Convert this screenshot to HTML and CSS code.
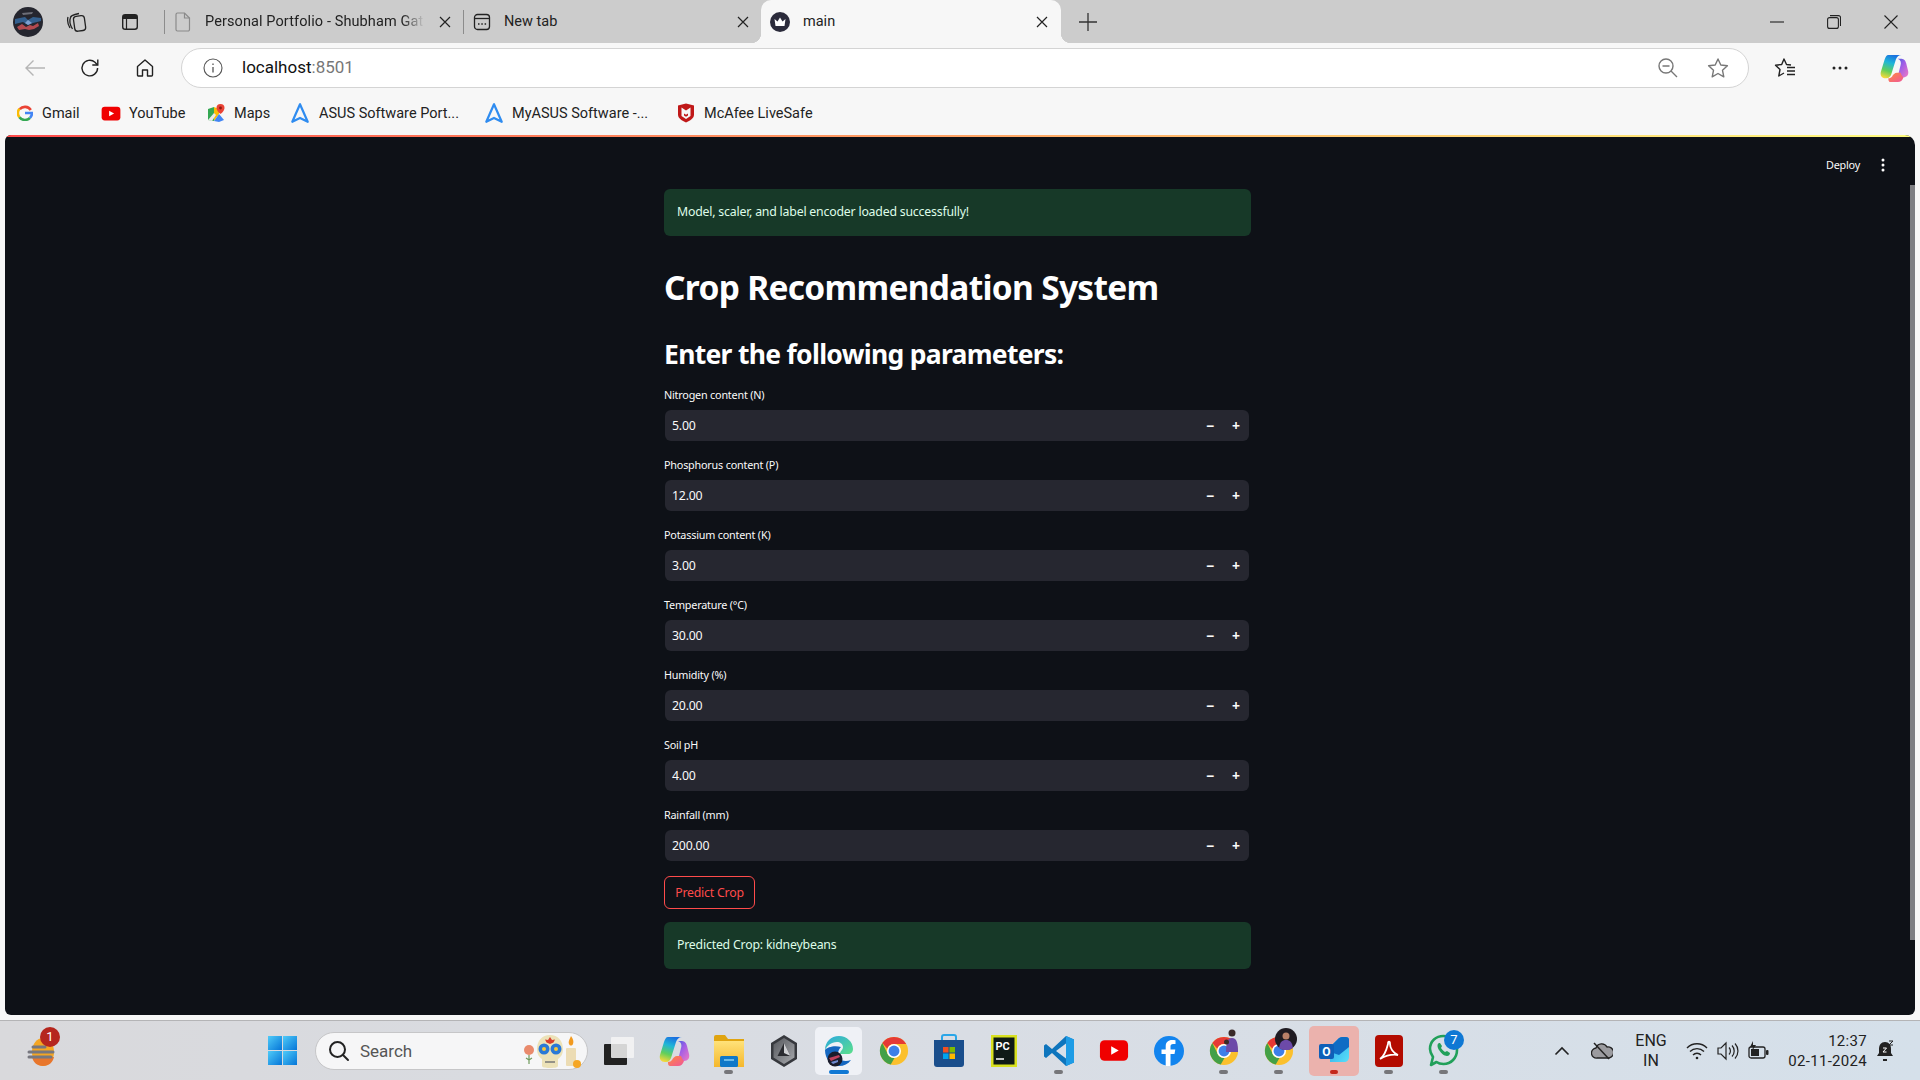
FILE: index.html
```html
<!DOCTYPE html>
<html lang="en">
<head>
<meta charset="utf-8">
<title>main</title>
<link rel="stylesheet" href="styles.css">
</head>
<body>
<svg class="defs" width="0" height="0" aria-hidden="true">
  <defs>
    <linearGradient id="copA" x1="0.6" y1="0" x2="0.3" y2="1"><stop offset="0" stop-color="#1a6fe0"/><stop offset=".35" stop-color="#1fb6d8"/><stop offset=".7" stop-color="#62cf5a"/><stop offset="1" stop-color="#f2d83c"/></linearGradient>
    <linearGradient id="copB" x1="0" y1="0" x2="1" y2="1"><stop offset="0" stop-color="#3a5fe0"/><stop offset=".45" stop-color="#a25ee6"/><stop offset="1" stop-color="#f07ac4"/></linearGradient>
    <linearGradient id="copC" x1="0" y1="0" x2="1" y2="1"><stop offset="0" stop-color="#ff8a3d"/><stop offset="1" stop-color="#f0569a"/></linearGradient>
    <linearGradient id="winG" x1="0" y1="0" x2="1" y2="1"><stop offset="0" stop-color="#4fcbf8"/><stop offset="1" stop-color="#0575d8"/></linearGradient>
    <linearGradient id="edgeG" x1="0" y1="0" x2="1" y2="1"><stop offset="0" stop-color="#2aa8e0"/><stop offset="1" stop-color="#5ce08a"/></linearGradient>
    <linearGradient id="folderG" x1="0" y1="0" x2="0" y2="1"><stop offset="0" stop-color="#ffe27a"/><stop offset="1" stop-color="#f5b72c"/></linearGradient>
    <linearGradient id="hexG" x1="0" y1="0" x2="1" y2="1"><stop offset="0" stop-color="#55575c"/><stop offset="1" stop-color="#a8aaae"/></linearGradient>
    <linearGradient id="olG" x1="0" y1="0" x2="1" y2="1"><stop offset="0" stop-color="#2aa3e8"/><stop offset="1" stop-color="#58e0fa"/></linearGradient>
    <symbol id="copilot" viewBox="0 0 32 32">
      <path d="M10 2h14c-3 0-5 2-6 5l-5 16c-1 2-2 4-5 4H7c-4 0-6-3-5-7L6 7c1-3 2-5 4-5z" fill="url(#copA)"/>
      <path d="M20 6h3c3 0 5 1 6 5l2 8c1 4-1 7-5 7h-8c2-1 3-3 3-5l2-8c1-3 0-6-3-7z" fill="url(#copB)"/>
      <path d="M10 27c2 0 3-1 4-2 1-2 3-4 5-4h4c1 3 3 5 3 5-1 3-3 5-6 5h-8c-2 0-2-3-2-4z" fill="url(#copC)"/>
    </symbol>
    <symbol id="chrome" viewBox="0 0 32 32">
      <circle cx="16" cy="16" r="15" fill="#fbc02d"/>
      <path d="M16 1a15 15 0 0 1 13 7.500H16a7.500 7.500 0 0 0-7 5L3.500 7.500A15 15 0 0 1 16 1z" fill="#e53935"/>
      <path d="M3.500 7.500L9.500 19.500a7.500 7.500 0 0 0 7 4L12.500 30.500A15 15 0 0 1 3.500 7.500z" fill="#43a047"/>
      <circle cx="16" cy="16" r="7.500" fill="#fff"/>
      <circle cx="16" cy="16" r="5.800" fill="#3d7fe8"/>
    </symbol>
    <symbol id="asus" viewBox="0 0 20 20">
      <path d="M10 2L3 18l7-3.500L17 18z" fill="none" stroke="#2f8cf0" stroke-width="2" stroke-linejoin="round"/>
    </symbol>
    <symbol id="ytb" viewBox="0 0 32 24">
      <rect x="1" y="1" width="30" height="22" rx="5" fill="#f00000"/>
      <path d="M13 7.500l8 4.500-8 4.500z" fill="#fff"/>
    </symbol>
  </defs>
</svg>

<header class="tabstrip">
  <svg class="avatar" width="30" height="30" viewBox="0 0 30 30"><circle cx="15" cy="15" r="15" fill="#25262f"/><path d="M2 12l10-2 3 3 5-3 8 1v3l-8 2-5 2-5-3-8 2z" fill="#34608f"/><path d="M4 20l5-3 4 3 4-2 3 1 5-3 1 3-5 3-5 1-4-1-6 1z" fill="#b24a50"/><path d="M9 6l11-1-1 2-9 1z" fill="#6c6e78"/><path d="M15 13l4 3-4 2-3-2z" fill="#7da0d0"/></svg>
  <button class="strip-btn" aria-label="Collections"><svg width="22" height="22" viewBox="0 0 22 22" fill="none" stroke="#222" stroke-width="1.300"><rect x="8" y="5" width="11" height="15" rx="3" transform="rotate(-8 13 12)"/><path d="M6.500 18C4 14 3.500 9 4.500 6.500 5 4.500 7 4 9 3.500l4-1"/><path d="M4 17C1.500 13 1.500 8 2 6"/></svg></button>
  <button class="strip-btn" aria-label="Vertical tabs"><svg width="20" height="20" viewBox="0 0 20 20"><rect x="2.700" y="2.700" width="14.600" height="14.600" rx="2.500" fill="none" stroke="#222" stroke-width="1.400"/><path d="M3 3h14v4H3z" fill="#222"/><path d="M6.500 7v10" stroke="#222" stroke-width="1.200"/></svg></button>
  <span class="tab-sep"></span>
  <div class="tab tab-first">
    <svg width="18" height="20" viewBox="0 0 18 20" fill="none" stroke="#8a8a8a" stroke-width="1.200"><path d="M3.500 1h7l5 5v11.500a1.500 1.500 0 0 1-1.500 1.500H3.500A1.500 1.500 0 0 1 2 17.500v-15A1.500 1.500 0 0 1 3.500 1z"/><path d="M10.500 1v5h5"/></svg>
    <span class="tab-title tab-fade">Personal Portfolio - Shubham Gat</span>
    <button class="tab-close" aria-label="Close"><svg width="12" height="12" viewBox="0 0 12 12" stroke="#222" stroke-width="1.200"><path d="M1 1l10 10M11 1L1 11"/></svg></button>
  </div>
  <span class="tab-sep tab-sep-flat"></span>
  <div class="tab tab-second">
    <svg width="18" height="18" viewBox="0 0 18 18" fill="none" stroke="#222" stroke-width="1.300"><rect x="1.500" y="1.500" width="15" height="15" rx="3"/><path d="M1.500 5.500h15"/><path d="M5 11h1.500M8.300 11h1.500M11.600 11h1.500" stroke-width="1.600"/></svg>
    <span class="tab-title">New tab</span>
    <button class="tab-close" aria-label="Close"><svg width="12" height="12" viewBox="0 0 12 12" stroke="#222" stroke-width="1.200"><path d="M1 1l10 10M11 1L1 11"/></svg></button>
  </div>
  <div class="tab tab-active">
    <svg width="20" height="20" viewBox="0 0 20 20"><circle cx="10" cy="10" r="10" fill="#2b2b3b"/><path d="M4.500 7l3 2.500L10 5.500l2.500 4 3-2.500-1 7h-9z" fill="#fff"/></svg>
    <span class="tab-title">main</span>
    <button class="tab-close" aria-label="Close"><svg width="12" height="12" viewBox="0 0 12 12" stroke="#222" stroke-width="1.200"><path d="M1 1l10 10M11 1L1 11"/></svg></button>
  </div>
  <button class="new-tab" aria-label="New tab"><svg width="18" height="18" viewBox="0 0 18 18" stroke="#333" stroke-width="1.300"><path d="M9 0v18M0 9h18"/></svg></button>
  <div class="win-controls">
    <button class="win-btn" aria-label="Minimize"><svg width="14" height="14" viewBox="0 0 14 14" stroke="#222" stroke-width="1.100"><path d="M0 7h14"/></svg></button>
    <button class="win-btn" aria-label="Restore"><svg width="14" height="14" viewBox="0 0 14 14" fill="none" stroke="#222" stroke-width="1.100"><rect x=".6" y="2.600" width="10.800" height="10.800" rx="2"/><path d="M3 .6h8.500a2 2 0 0 1 2 2V11"/></svg></button>
    <button class="win-btn" aria-label="Close window"><svg width="14" height="14" viewBox="0 0 14 14" stroke="#222" stroke-width="1.100"><path d="M.5.500l13 13M13.500.500l-13 13"/></svg></button>
  </div>
</header>

<nav class="toolbar">
  <button class="tool-btn" aria-label="Back"><svg width="22" height="18" viewBox="0 0 22 18" fill="none" stroke="#b5b5b5" stroke-width="1.400"><path d="M21 9H2M9.500 1.500L2 9l7.500 7.500"/></svg></button>
  <button class="tool-btn" aria-label="Reload"><svg width="22" height="22" viewBox="0 0 22 22" fill="none" stroke="#222" stroke-width="1.400"><path d="M18.600 11a7.800 7.800 0 1 1-2.600-5.800L18.500 8"/><path d="M18.800 2.500V8h-5.500"/></svg></button>
  <button class="tool-btn" aria-label="Home"><svg width="20" height="20" viewBox="0 0 20 20" fill="none" stroke="#222" stroke-width="1.400" stroke-linejoin="round"><path d="M2.500 8.500L10 2l7.500 6.500V17a1 1 0 0 1-1 1h-4v-6h-5v6h-4a1 1 0 0 1-1-1z"/></svg></button>
  <div class="address">
    <svg class="addr-info" width="20" height="20" viewBox="0 0 20 20" fill="none" stroke="#555" stroke-width="1.100"><circle cx="10" cy="10" r="9"/><path d="M10 9v5.500M10 5.500v1.500" stroke-width="1.300"/></svg>
    <span class="addr-text">localhost<span class="addr-port">:8501</span></span>
    <svg class="addr-zoom" width="20" height="20" viewBox="0 0 20 20" fill="none" stroke="#777" stroke-width="1.400"><circle cx="8" cy="8" r="7"/><path d="M13 13l6 6M4.500 8h7"/></svg>
    <svg class="addr-star" width="22" height="22" viewBox="0 0 22 22" fill="none" stroke="#777" stroke-width="1.400" stroke-linejoin="round"><path d="M11 2l2.800 6 6.600.8-4.900 4.500 1.300 6.500L11 16.500l-5.800 3.300 1.300-6.500L1.600 8.800 8.200 8z"/></svg>
  </div>
  <button class="tool-btn tool-fav" aria-label="Favorites"><svg width="24" height="22" viewBox="0 0 24 22" fill="none" stroke="#222" stroke-width="1.400" stroke-linejoin="round"><path d="M17 8l-4.500-.5L10 2 7.700 7.500 1.500 8.200 6 12.500 4.800 19 10 16"/><path d="M13 10.500h8M13 14h8M13 17.500h8"/></svg></button>
  <button class="tool-btn" aria-label="More"><svg width="16" height="4" viewBox="0 0 16 4" fill="#222"><circle cx="2" cy="2" r="1.500"/><circle cx="8" cy="2" r="1.500"/><circle cx="14" cy="2" r="1.500"/></svg></button>
  <button class="tool-btn tool-copilot" aria-label="Copilot"><svg width="30" height="30"><use href="#copilot"/></svg></button>
</nav>

<nav class="bookmarks">
  <a class="bm bm-gmail"><svg width="16" height="16" viewBox="0 0 16 16" fill="none" stroke-width="2.600"><path d="M13.800 4.400A7 7 0 0 0 2.700 3.600" stroke="#ea4335" transform="translate(0 .6)"/><path d="M2.400 3.800a7 7 0 0 0 0 8.400" stroke="#fbbc05"/><path d="M2.400 12.200a7 7 0 0 0 10.600.6" stroke="#34a853"/><path d="M13 12.800A7 7 0 0 0 15 8H8" stroke="#4285f4"/></svg>Gmail</a>
  <a class="bm bm-yt"><svg width="20" height="15"><use href="#ytb"/></svg>YouTube</a>
  <a class="bm bm-maps"><svg width="18" height="18" viewBox="0 0 18 18"><path d="M1 5l6-2v14l-6-1z" fill="#34a853"/><path d="M7 3l5 2v5L7 17z" fill="#fbbc05"/><path d="M7 17l5-7 5 6-5 2z" fill="#4285f4"/><path d="M1 16l6-7 2 2-4 6z" fill="#e8e8e8"/><path d="M13.500 0a4 4 0 0 1 4 4c0 3-4 6-4 6s-4-3-4-6a4 4 0 0 1 4-4z" fill="#ea4335"/><circle cx="13.500" cy="4" r="1.400" fill="#8b1a12"/></svg>Maps</a>
  <a class="bm bm-asus"><svg width="22" height="22"><use href="#asus"/></svg>ASUS Software Port...</a>
  <a class="bm bm-myasus"><svg width="22" height="22"><use href="#asus"/></svg>MyASUS Software -...</a>
  <a class="bm bm-mcafee"><svg width="20" height="20" viewBox="0 0 20 20"><path d="M2 2.500L10 .5l8 2v9c0 4-4 6-8 8-4-2-8-4-8-8z" fill="#c01818"/><path d="M5.500 4.500l4.500 3 4.500-3v8.500L10 16l-4.500-3z" fill="#f7f7f7"/><path d="M8 10.500l2 1.300 2-1.300v2L10 13.800 8 12.500z" fill="#c01818"/></svg>McAfee LiveSafe</a>
</nav>

<div class="viewport">
  <div class="app">
    <div class="app-line"></div>
    <div class="app-body">
      <div class="app-scroll">
        <main class="block">
          <div class="alert">Model, scaler, and label encoder loaded successfully!</div>
          <h1>Crop Recommendation System</h1>
          <h2>Enter the following parameters:</h2>
          <section class="fields">
            <div class="field"><label>Nitrogen content (N)</label><div class="num"><span class="num-val">5.00</span><span class="step">−</span><span class="step">+</span></div></div>
            <div class="field"><label>Phosphorus content (P)</label><div class="num"><span class="num-val">12.00</span><span class="step">−</span><span class="step">+</span></div></div>
            <div class="field"><label>Potassium content (K)</label><div class="num"><span class="num-val">3.00</span><span class="step">−</span><span class="step">+</span></div></div>
            <div class="field"><label>Temperature (°C)</label><div class="num"><span class="num-val">30.00</span><span class="step">−</span><span class="step">+</span></div></div>
            <div class="field"><label>Humidity (%)</label><div class="num"><span class="num-val">20.00</span><span class="step">−</span><span class="step">+</span></div></div>
            <div class="field"><label>Soil pH</label><div class="num"><span class="num-val">4.00</span><span class="step">−</span><span class="step">+</span></div></div>
            <div class="field"><label>Rainfall (mm)</label><div class="num"><span class="num-val">200.00</span><span class="step">−</span><span class="step">+</span></div></div>
          </section>
          <button class="predict">Predict Crop</button>
          <div class="alert alert-result">Predicted Crop: kidneybeans</div>
        </main>
        <div class="deploy-bar"><span class="deploy">Deploy</span><svg width="4" height="14" viewBox="0 0 4 14" fill="#fff"><circle cx="2" cy="2" r="1.500"/><circle cx="2" cy="7" r="1.500"/><circle cx="2" cy="12" r="1.500"/></svg></div>
      </div>
      <div class="scrollbar"><div class="scroll-thumb"></div></div>
    </div>
  </div>
</div>

<footer class="taskbar">
  <div class="weather">
    <svg width="30" height="32" viewBox="0 0 30 32"><ellipse cx="16" cy="17" rx="11" ry="14" fill="#f5a623"/><path d="M16 31c-6 0-10-4-11-9h22c-1 5-5 9-11 9z" fill="#e8762c"/><path d="M6 12h12M2 17h24M2 22h22" stroke="#77777f" stroke-width="3" stroke-linecap="round"/></svg>
    <span class="badge badge-red">1</span>
  </div>
  <div class="task task-start"><svg width="29" height="29" viewBox="0 0 29 29"><rect width="14" height="14" fill="url(#winG)"/><rect x="15" width="14" height="14" fill="url(#winG)"/><rect y="15" width="14" height="14" fill="url(#winG)"/><rect x="15" y="15" width="14" height="14" fill="url(#winG)"/></svg></div>
  <div class="search">
    <svg width="22" height="22" viewBox="0 0 22 22" fill="none" stroke="#222" stroke-width="2"><circle cx="9.500" cy="9.500" r="7.500"/><path d="M15 15l5 5" stroke-linecap="round"/></svg>
    <span class="search-text">Search</span>
    <svg class="search-art" width="62" height="36" viewBox="0 0 62 36"><g transform="translate(4 0)"><circle cx="6" cy="17" r="5" fill="#e98a6c"/><path d="M6 22v9M6 27l-3-2M6 27l3-2" stroke="#6f9a5c" stroke-width="1.200" fill="none"/><path d="M27 2c8 0 13 6 13 14 0 5-2 8-5 10v7c0 1-2 2-8 2s-8-1-8-2v-7c-3-2-5-5-5-10 0-8 5-14 13-14z" fill="#ece2b8"/><circle cx="21" cy="16" r="5.500" fill="#2a79d6"/><circle cx="33" cy="16" r="5.500" fill="#2a79d6"/><circle cx="21" cy="16" r="2" fill="#f5c73c"/><circle cx="33" cy="16" r="2" fill="#f5c73c"/><path d="M27 4l2 3 3-.5-1.500 3L27 11l-3.500-1.500L22 6.500l3 .5z" fill="#d8402f"/><path d="M22 29h10" stroke="#777" stroke-width="1.500"/></g><rect x="47" y="15" width="10" height="18" rx="1" fill="#ecdcb4"/><path d="M52 3c2 3 3 5 2 8-1 2-3 2-4 0-1-3 1-5 2-8z" fill="#f29a1f"/><circle cx="58" cy="31" r="4" fill="#f5a623"/></svg>
  </div>
  <div class="task"><svg width="30" height="28" viewBox="0 0 30 28"><rect y="7" width="23" height="21" rx="1" fill="#222"/><rect x="7" width="23" height="21" rx="1" fill="#f4f4f5" fill-opacity=".85"/></svg></div>
  <div class="task"><svg width="32" height="32"><use href="#copilot"/></svg></div>
  <div class="task task-dot"><svg width="30" height="32" viewBox="0 0 30 32"><path d="M0 2a2 2 0 0 1 2-2h9l3 4h16v28H0z" fill="#e0a410"/><path d="M0 6h30v26H0z" fill="url(#folderG)"/><rect x="6" y="21" width="18" height="11" rx="1.500" fill="#0f78c8"/><path d="M10 25h10" stroke="#8ad0f5" stroke-width="1.500"/></svg></div>
  <div class="task"><svg width="26" height="32" viewBox="0 0 26 32"><path d="M13 0l13 8v16l-13 8L0 24V8z" fill="#36383d"/><path d="M13 3l10.500 6.500v13L13 29 2.500 22.500v-13z" fill="url(#hexG)"/><path d="M13 8l6.500 13H6.500z" fill="#2a2b30"/><path d="M13 8l6.500 13-6.500-3z" fill="#cfd0d3"/></svg></div>
  <div class="task task-tile"><svg width="30" height="32" viewBox="0 0 30 32"><path d="M1 15C1 7 7 1 15 1c8 0 14 6 14 13 0 3-2 5-5 5h-8c0-3 3-4 3-7 0-3-3-5-6-5-6 0-10 4-12 8z" fill="url(#edgeG)"/><path d="M1 15c0 9 6 16 14 16 5 0 9-2 12-6-5 2-10 1-12-2-2-3-1-8 2-11-6-2-14 0-16 3z" fill="#1567c0"/><circle cx="11" cy="24" r="7.500" fill="#1a1c2c"/><path d="M5 23l10-3 1 2-9 4z" fill="#c0405c"/><path d="M7 27l7-2v2l-5 2z" fill="#6f8ad0"/></svg><span class="task-bar"></span></div>
  <div class="task"><svg width="30" height="30"><use href="#chrome"/></svg></div>
  <div class="task"><svg width="30" height="34" viewBox="0 0 30 34"><path d="M8 7V3a2 2 0 0 1 2-2h10a2 2 0 0 1 2 2v4" fill="none" stroke="#2aa6e8" stroke-width="2"/><path d="M0 6h30v24a3 3 0 0 1-3 3H3a3 3 0 0 1-3-3z" fill="#1a4e8c"/><rect x="9" y="13" width="5.500" height="5.500" fill="#f25022"/><rect x="15.500" y="13" width="5.500" height="5.500" fill="#7fba00"/><rect x="9" y="19.500" width="5.500" height="5.500" fill="#00a4ef"/><rect x="15.500" y="19.500" width="5.500" height="5.500" fill="#ffb900"/></svg></div>
  <div class="task"><svg width="26" height="32" viewBox="0 0 26 32"><rect width="26" height="32" fill="#d8e020"/><rect x="2.500" y="2.500" width="21" height="27" fill="#0f1a16"/><text x="4.500" y="15" class="pc-text">PC</text><path d="M5 24h8" stroke="#fff" stroke-width="1.500"/></svg></div>
  <div class="task task-dot"><svg width="30" height="30" viewBox="0 0 30 30"><path d="M22 0l8 3.500v23L22 30 8 17l-6 5-2-1.500V9.500L2 8l6 5z" fill="#0e75bd"/><path d="M22 0l8 3.500v23L22 30z" fill="#1e9ce6"/><path d="M22 7.500L12 15l10 7.500z" fill="#d8e0ea"/></svg></div>
  <div class="task"><svg width="30" height="23"><use href="#ytb"/></svg></div>
  <div class="task"><svg width="30" height="30" viewBox="0 0 30 30"><circle cx="15" cy="15" r="15" fill="#1284ee"/><path d="M16.500 30V18h4l.8-4.500h-4.800V10.500c0-1.500.7-2.500 2.600-2.500h2.400V4.200C20.500 4 19.200 4 18 4c-3.800 0-6.300 2.300-6.300 6.200v3.300H7.500V18h4.200v12z" fill="#fff"/></svg></div>
  <div class="task task-dot"><svg width="30" height="30"><use href="#chrome"/></svg><svg class="chrome-person" width="16" height="24" viewBox="0 0 16 24"><circle cx="9" cy="4" r="3.500" fill="#3a2a28"/><path d="M3 23c0-8 1-14 6-14s6 6 6 14z" fill="#6c4aa8"/><circle cx="3.500" cy="13" r="2.500" fill="#3a2a28"/></svg></div>
  <div class="task task-dot"><svg width="30" height="30"><use href="#chrome"/></svg><svg class="chrome-person chrome-person-big" width="22" height="22" viewBox="0 0 22 22"><circle cx="11" cy="11" r="11" fill="#1f1b22"/><circle cx="11" cy="8" r="3.500" fill="#b98068"/><path d="M4 20c1-6 3-8 7-8s6 2 7 8c-4 3-10 3-14 0z" fill="#6c4aa8"/></svg></div>
  <div class="task task-tile task-outlook"><svg width="30" height="27" viewBox="0 0 30 27"><path d="M11 10l8-8c1-1 2-2 4-2h4c2 0 3 1 3 3v17c0 3-2 5-5 5H11z" fill="url(#olG)"/><path d="M11 10l8-8c1-1 2-2 4-2h4c2 0 3 1 3 3v7L20 18l-9-3z" fill="#0f6cc4"/><rect x="0" y="7" width="15" height="15" rx="2" fill="#0f5fb8"/><text x="7.500" y="19" class="ol-text">O</text></svg><span class="task-bar task-bar-red"></span></div>
  <div class="task task-dot"><svg width="28" height="32" viewBox="0 0 28 32"><rect width="28" height="32" rx="4" fill="#b30b00"/><path d="M5 24c3-2 6-7 8-15 0-3 2-3 2 0 0 4 3 9 8 11-6-1-11 0-18 4z" fill="none" stroke="#fff" stroke-width="1.800"/></svg></div>
  <div class="task task-dot"><svg width="32" height="34" viewBox="0 0 32 34"><path d="M3 31l2-8C3 20 2 17 2 15 2 7 8 2 15.500 2S29 8 29 16s-6 14-13.500 14c-3 0-5-.5-7-2z" fill="none" stroke="#21a05a" stroke-width="2.600" stroke-linejoin="round"/><path d="M11 9c-2 1-2 4 0 7s5 6 8 6c2 0 3-2 3-3l-3-2-2 1c-2-1-3-3-4-4l1-2-2-3z" fill="#21a05a"/></svg><span class="badge badge-blue">7</span></div>
  <div class="tray">
    <svg class="tray-chevron" width="16" height="10" viewBox="0 0 16 10" fill="none" stroke="#222" stroke-width="1.600"><path d="M1.500 8.500L8 2l6.500 6.500"/></svg>
    <svg class="tray-cloud" width="22" height="18" viewBox="0 0 22 18"><path d="M6 16a5 5 0 0 1-1-10 6 6 0 0 1 11-1 5 5 0 0 1 2 11z" fill="#9b9b9f" stroke="#222" stroke-width="1.300"/><path d="M3 1l15 16" stroke="#222" stroke-width="1.500"/></svg>
    <div class="lang"><span>ENG</span><span>IN</span></div>
    <svg class="tray-wifi" width="22" height="18" viewBox="0 0 22 18" fill="none" stroke="#222" stroke-width="1.400"><path d="M1 6a14 14 0 0 1 20 0M4 9.500a10 10 0 0 1 14 0M7 13a5.500 5.500 0 0 1 8 0"/><circle cx="11" cy="16" r="1.300" fill="#222" stroke="none"/></svg>
    <svg class="tray-vol" width="22" height="20" viewBox="0 0 22 20" fill="none" stroke="#222" stroke-width="1.200"><path d="M1 7v6h3l5 5V2L4 7z"/><path d="M12 6.500a5 5 0 0 1 0 7M15 4.500a8 8 0 0 1 0 11M18 2.500a11 11 0 0 1 0 15"/></svg>
    <svg class="tray-bat" width="22" height="20" viewBox="0 0 22 20"><rect x="1" y="6" width="16" height="11" rx="2" fill="none" stroke="#222" stroke-width="1.300"/><rect x="3" y="8" width="8" height="7" fill="#222"/><rect x="18" y="9" width="2.500" height="5" rx="1" fill="#222"/><path d="M5 0L2 6h3l-1 4 4-6H5z" fill="#222"/></svg>
    <div class="clock"><span>12:37</span><span>02-11-2024</span></div>
    <svg class="tray-bell" width="18" height="22" viewBox="0 0 18 22"><path d="M9 2c-4 0-6 3-6 7v4l-2 3h16l-2-3V9c0-4-2-7-6-7z" fill="#222"/><path d="M7 19h4v2H7z" fill="#222"/><path d="M7 8h3.500L7 12h3.500" fill="none" stroke="#fff" stroke-width="1"/><path d="M13 1h4l-4 4h4" fill="none" stroke="#222" stroke-width="1"/></svg>
  </div>
</footer>
</body>
</html>
```
FILE: styles.css
```css
* { box-sizing: border-box; }
html, body { margin: 0; height: 100%; }
body {
  width: 1920px;
  height: 1080px;
  overflow: hidden;
  display: flex;
  flex-direction: column;
  background: #f7f7f7;
  font-family: "Noto Sans", "Open Sans", sans-serif;
  color: #222;
}
button { background: none; border: 0; padding: 0; display: flex; align-items: center; justify-content: center; font: inherit; color: inherit; }
.defs { position: absolute; }

/* Tab strip */
.tabstrip { height: 43px; flex: none; display: flex; align-items: center; background: #cccccc; padding-left: 13px; }
.avatar { flex: none; margin-right: 7px; }
.strip-btn { width: 53px; height: 43px; flex: none; }
.tab-sep { width: 1px; height: 24px; background: #8c8c8c; margin-left: 8px; flex: none; }
.tab-sep-flat { margin-left: 0; }
.tab { display: flex; align-items: center; height: 43px; flex: none; font-family: "Roboto", sans-serif; font-size: 14.500px; color: #222; }
.tab-first { width: 298px; padding-left: 9px; padding-right: 12px; }
.tab-second { width: 297px; padding-left: 9px; padding-right: 12px; }
.tab-title { margin-left: 13px; flex: 1; white-space: nowrap; }
.tab-fade { letter-spacing: .1px; -webkit-mask-image: linear-gradient(90deg, #000 88%, transparent 98%); mask-image: linear-gradient(90deg, #000 88%, transparent 98%); }
.tab-close { width: 12px; height: 12px; flex: none; margin-left: 10px; }
.tab-active { width: 300px; background: #f7f7f7; border-radius: 10px 10px 0 0; position: relative; padding-left: 9px; padding-right: 13px; }
.tab-active::before, .tab-active::after { content: ""; position: absolute; bottom: 0; width: 10px; height: 10px; }
.tab-active::before { left: -10px; background: radial-gradient(circle at 0 0, transparent 10px, #f7f7f7 10.5px); }
.tab-active::after { right: -10px; background: radial-gradient(circle at 100% 0, transparent 10px, #f7f7f7 10.5px); }
.new-tab { width: 18px; height: 18px; margin-left: 18px; flex: none; }
.win-controls { margin-left: auto; display: flex; padding-right: 1px; }
.win-btn { width: 57px; height: 43px; }

/* Toolbar */
.toolbar { height: 50px; flex: none; display: flex; align-items: center; background: #f7f7f7; padding: 0 0 0 7px; }
.tool-btn { width: 55px; height: 40px; flex: none; }
.address { width: 1568px; height: 40px; margin: 0 8px 0 9px; flex: none; display: flex; align-items: center; background: #fff; border: 1.500px solid #d4d4d4; border-radius: 20px; padding: 0 19px 0 21px; }
.addr-text { margin-left: 19px; padding-bottom: 2px; font-family: "Roboto", sans-serif; font-size: 17px; color: #111; }
.addr-port { color: #777; }
.addr-zoom { margin-left: auto; margin-right: -1px; }
.addr-star { margin-left: 30px; }
.tool-fav { margin-left: 1px; margin-right: -1px; }
.tool-copilot { margin-left: -1px; }

/* Bookmarks */
.bookmarks { height: 42px; flex: none; display: flex; align-items: center; padding-bottom: 2px; background: #f7f7f7; font-family: "Roboto", sans-serif; font-size: 14.500px; color: #222; }
.bm { display: flex; align-items: center; white-space: nowrap; flex: none; }
.bm-gmail { margin-left: 17px; gap: 9px; width: 84px; }
.bm-yt { gap: 8px; width: 106px; }
.bm-maps { gap: 9px; width: 82px; }
.bm-asus { gap: 8px; width: 194px; }
.bm-myasus { gap: 7px; width: 193px; }
.bm-mcafee { gap: 8px; }

/* App viewport */
.viewport { height: 885px; flex: none; padding: 0 5px 5px; background: #f7f7f7; }
.app { height: 880px; background: #0e1117; border-radius: 6px 10px 6px 6px; overflow: hidden; display: flex; flex-direction: column; }
.app-line { height: 2px; flex: none; background: linear-gradient(90deg, #ff4b4b, #fffd80); }
.app-body { flex: 1; display: flex; min-height: 0; }
.app-scroll { flex: 1; position: relative; display: flex; justify-content: center; }
.scrollbar { width: 5px; flex: none; padding-top: 48px; }
.scroll-thumb { height: 755px; background: #7d7e82; }
.block { width: 587px; padding-top: 52px; font-family: "Noto Sans", "Open Sans", sans-serif; color: #fafafa; }
.alert { height: 47px; background: #173928; border-radius: 6px; color: #dffde9; font-size: 12.300px; letter-spacing: -0.2px; padding: 0 13px 2px; display: flex; align-items: center; }
h1 { margin: 0; padding-top: 28px; height: 84px; font-size: 33.500px; line-height: 46px; font-weight: 700; letter-spacing: -0.7px; color: #fff; }
h2 { margin: 0; padding-top: 15px; height: 65px; font-size: 26.500px; line-height: 38px; font-weight: 700; letter-spacing: -0.7px; color: #fff; }
.fields { display: flex; flex-direction: column; gap: 14px; }
.field { height: 56px; display: flex; flex-direction: column; margin-right: 2px; }
label { height: 25px; font-size: 10.800px; line-height: 14px; padding-top: 3px; letter-spacing: -0.2px; color: #fafafa; }
.num { height: 31px; margin-left: 1px; background: #262730; border-radius: 6px; display: flex; align-items: center; font-size: 12.300px; letter-spacing: -0.2px; padding: 0 0 0 7px; }
.num-val { flex: 1; }
.step { width: 26px; text-align: center; font-size: 14px; font-weight: 700; color: #fafafa; }
.predict { width: 91px; height: 33px; margin-top: 15px; border: 1px solid #ff4b4b; border-radius: 6px; background: #0e1117; color: #ff4b4b; font-family: "Noto Sans", sans-serif; font-size: 12.300px; letter-spacing: -0.2px; }
.alert-result { margin-top: 13px; }
.deploy-bar { position: absolute; top: 20px; right: 25px; display: flex; align-items: center; gap: 21px; font-family: "Noto Sans", sans-serif; font-size: 10.800px; letter-spacing: -0.2px; color: #fafafa; }

/* Taskbar */
.taskbar { height: 60px; flex: none; display: flex; align-items: center; position: relative; border-top: 1px solid #b4b4b6; background: linear-gradient(90deg, #d9d9dc, #d9dde4 50%, #d5e0ea); }
.weather { width: 255px; flex: none; padding-left: 27px; position: relative; display: flex; }
.badge { position: absolute; width: 20px; height: 20px; border-radius: 50%; color: #fff; font-family: "Roboto", sans-serif; font-size: 13px; display: flex; align-items: center; justify-content: center; }
.badge-red { background: #b5261e; left: 40px; top: -8px; }
.badge-blue { background: #0f78d4; right: 7px; top: 3px; }
.task { width: 55px; height: 48px; flex: none; display: flex; align-items: center; justify-content: center; position: relative; }
.search { width: 273px; height: 38px; margin: 0 3px 0 5px; flex: none; display: flex; align-items: center; background: #f6f6f7; border: 1px solid #c6c6c8; border-radius: 19px; padding: 0 6px 0 12px; }
.search-text { margin-left: 10px; font-family: "Roboto", sans-serif; font-size: 17px; color: #555; }
.search-art { margin-left: auto; }
.task-dot::after { content: ""; position: absolute; left: 23px; bottom: 1px; width: 9px; height: 4px; border-radius: 2px; background: #76767a; }
.task-tile { background: #eff1f6; border-radius: 5px; width: 47px; margin: 0 4px; }
.task-bar { position: absolute; left: 14px; bottom: 1px; width: 20px; height: 4px; border-radius: 2px; background: #0f78d4; }
.task-outlook { background: #ebb2ad; width: 50px; height: 50px; margin: 0 2.500px; }
.task-bar-red { left: 21px; width: 8px; bottom: 2px; background: #c4281c; }
.chrome-person { position: absolute; left: 27px; top: 2px; }
.chrome-person-big { left: 24px; top: 1px; }
.pc-text { font-family: "Roboto", sans-serif; font-size: 11px; font-weight: 700; fill: #fff; }
.ol-text { font-family: "Roboto", sans-serif; font-size: 12px; font-weight: 700; fill: #fff; text-anchor: middle; }

.tray { margin-left: auto; display: flex; align-items: center; height: 100%; padding-right: 26px; font-family: "Roboto", sans-serif; color: #222; }
.lang { width: 56px; margin: 0 7px 0 10px; display: flex; flex-direction: column; align-items: center; font-size: 16px; line-height: 20px; }
.tray-cloud { margin-left: 21px; }
.tray-vol { margin-left: 9px; }
.tray-bat { margin-left: 9px; }
.clock { width: 98px; margin-left: -1px; margin-right: 9px; display: flex; flex-direction: column; align-items: flex-end; font-size: 15px; letter-spacing: .3px; line-height: 20px; white-space: nowrap; }
```
